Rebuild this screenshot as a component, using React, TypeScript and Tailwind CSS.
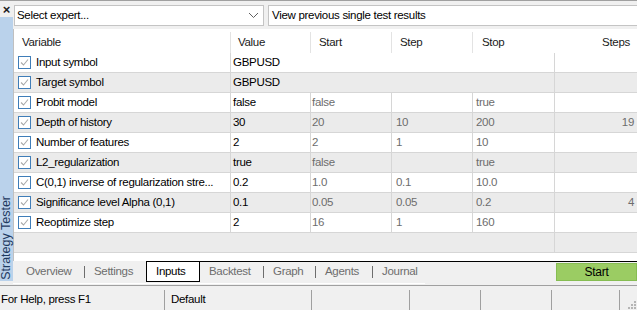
import React from 'react';

interface InputRow {
  name: string;
  value: string;
  merged?: boolean;
  start?: string;
  step?: string;
  stop?: string;
  steps?: string;
}

const rows: InputRow[] = [
  { name: 'Input symbol', value: 'GBPUSD', merged: true },
  { name: 'Target symbol', value: 'GBPUSD', merged: true },
  { name: 'Probit model', value: 'false', start: 'false', step: '', stop: 'true', steps: '' },
  { name: 'Depth of history', value: '30', start: '20', step: '10', stop: '200', steps: '19' },
  { name: 'Number of features', value: '2', start: '2', step: '1', stop: '10', steps: '' },
  { name: 'L2_regularization', value: 'true', start: 'false', step: '', stop: 'true', steps: '' },
  { name: 'C(0,1) inverse of regularization stre...', value: '0.2', start: '1.0', step: '0.1', stop: '10.0', steps: '' },
  { name: 'Significance level Alpha (0,1)', value: '0.1', start: '0.05', step: '0.05', stop: '0.2', steps: '4' },
  { name: 'Reoptimize step', value: '2', start: '16', step: '1', stop: '160', steps: '' },
];

function CheckBox() {
  return (
    <span className="w-[13px] h-[13px] shrink-0 border border-[#3f7db8] bg-white flex items-center justify-center">
      <svg width="9" height="9" viewBox="0 0 9 9">
        <path d="M1 4.5 L3.5 7 L8 1.5" stroke="#a9a9a9" strokeWidth="1.1" fill="none" />
      </svg>
    </span>
  );
}

function Sep() {
  return <span className="w-px h-[12px] bg-[#6d6d6d] shrink-0" />;
}

export default function App() {
  return (
    <div className="w-[637px] h-[310px] overflow-hidden bg-[#f0f0f0] border-t border-[#a0a0a0] flex flex-col font-['Liberation_Sans',Arial,sans-serif] text-[11.5px] tracking-[-0.3px] text-black">
      <div className="flex h-[285px]">
        {/* Sidebar */}
        <div className="w-[13px] shrink-0 flex flex-col">
          <div className="h-[16px] flex items-center justify-center text-[13px] font-bold text-[#202020] leading-none">×</div>
          <div className="h-[264px] bg-[#bad2eb] flex flex-col justify-end items-center pb-[1px]">
            <span className="[writing-mode:vertical-rl] rotate-180 text-[#1e3a5f] leading-none text-[12.5px] tracking-normal whitespace-nowrap">
              Strategy Tester
            </span>
          </div>
        </div>

        {/* Main */}
        <div className="flex-1 flex flex-col">
          {/* Selectors */}
          <div className="pt-[4px] pl-[1px] flex gap-[4px] h-[25px]">
            <div className="w-[250px] h-[21px] bg-white border border-[#c4c4c4] flex items-center pl-[2px] pr-[4px]">
              <span className="flex-1">Select expert...</span>
              <svg width="11" height="7" viewBox="0 0 11 7">
                <path d="M1 1 L5.5 5.5 L10 1" stroke="#606060" strokeWidth="1" fill="none" />
              </svg>
            </div>
            <div className="flex-1 h-[21px] bg-white border border-[#c4c4c4] border-r-0 flex items-center pl-[3px]">
              View previous single test results
            </div>
          </div>

          {/* Table */}
          <div className="mt-[3px] h-[232px] bg-white border-l border-[#c0c0c0] flex flex-col">
            <div className="h-[24px] pt-[3px] grid grid-cols-[217px_80px_81px_81px_82px_1fr] text-[#1a1a1a]">
              <div className="border-r border-[#e3e3e3] flex items-center pl-[8px]">Variable</div>
              <div className="border-r border-[#e3e3e3] flex items-center pl-[7px]">Value</div>
              <div className="border-r border-[#e3e3e3] flex items-center pl-[8px]">Start</div>
              <div className="border-r border-[#e3e3e3] flex items-center pl-[8px]">Step</div>
              <div className="flex items-center pl-[9px]">Stop</div>
              <div className="flex items-center justify-end pr-[7px]">Steps</div>
            </div>
            {rows.map((r, i) => (
              <div
                key={r.name}
                className={`h-[20px] grid grid-cols-[217px_80px_81px_81px_82px_1fr] border-b border-[#d6d6d6] ${
                  i % 2 === 1 ? 'bg-[#ebebeb]' : 'bg-white'
                }`}
              >
                <div className="border-r border-[#d6d6d6] flex items-center gap-[5px] pl-[4px] overflow-hidden whitespace-nowrap">
                  <CheckBox />
                  <span>{r.name}</span>
                </div>
                {r.merged ? (
                  <div className="col-span-4 border-r border-[#d6d6d6] flex items-center pl-[2px]">{r.value}</div>
                ) : (
                  <>
                    <div className="border-r border-[#d6d6d6] flex items-center pl-[2px]">{r.value}</div>
                    <div className="border-r border-[#d6d6d6] flex items-center pl-[1px] text-[#6d6d6d]">{r.start}</div>
                    <div className="border-r border-[#d6d6d6] flex items-center pl-[4px] text-[#6d6d6d]">{r.step}</div>
                    <div className="border-r border-[#d6d6d6] flex items-center pl-[3px] text-[#6d6d6d]">{r.stop}</div>
                  </>
                )}
                <div className="flex items-center justify-end pr-[3px] text-[#6d6d6d]">{r.steps}</div>
              </div>
            ))}
            <div className="h-[20px] grid grid-cols-[541px_1fr] border-b border-[#d6d6d6] bg-[#ebebeb]">
              <div className="border-r border-[#d6d6d6]" />
              <div />
            </div>
          </div>

          {/* Tabs */}
          <div className="h-[22px] flex">
            <div className="flex items-center text-[#6d6d6d] h-[21px] pt-[1px]">
              <span className="w-[71px] pl-[13px]">Overview</span>
              <Sep />
              <span className="w-[61px] pl-[9px]">Settings</span>
            </div>
            <div className="flex-1 flex border-t border-black h-[21px]">
              <div className="w-[54px] h-[20px] bg-white border-l border-r border-b border-black flex items-center pl-[9px]">
                Inputs
              </div>
              <div className="flex items-center text-[#6d6d6d] h-[20px]">
                <span className="w-[63px] pl-[9px]">Backtest</span>
                <Sep />
                <span className="w-[51px] pl-[9px]">Graph</span>
                <Sep />
                <span className="w-[56px] pl-[9px]">Agents</span>
                <Sep />
                <span className="pl-[9px]">Journal</span>
              </div>
              <div className="flex-1" />
              <div className="mt-[1px] w-[81px] h-[18px] bg-[#9bcc63] border border-[#86bd52] flex items-center justify-center text-[12px]">
                Start
              </div>
            </div>
          </div>
          <div className="h-px">
            <div className="w-[412px] h-px bg-white" />
          </div>
        </div>
      </div>

      {/* Status bar */}
      <div className="h-[25px] border-t border-[#a0a0a0] flex text-black">
        <div className="w-[164px] flex items-center pl-[1px] pt-[3px]">For Help, press F1</div>
        <div className="w-px mt-[4px] bg-[#a0a0a0]" />
        <div className="w-[146px] flex items-center pl-[6px] pt-[3px]">Default</div>
        <div className="w-px mt-[4px] bg-[#a0a0a0]" />
        <div className="w-[97px]" />
        <div className="w-px mt-[4px] bg-[#a0a0a0]" />
        <div className="w-[70px]" />
        <div className="w-px mt-[4px] bg-[#a0a0a0]" />
        <div className="w-[70px]" />
        <div className="w-px mt-[4px] bg-[#a0a0a0]" />
        <div className="w-[67px]" />
        <div className="w-px mt-[4px] bg-[#a0a0a0]" />
        <div className="flex-1 flex items-end justify-end pr-[1px] pb-[1px]">
          <svg width="8" height="8" viewBox="0 0 8 8">
            <rect x="6" y="0" width="2" height="2" fill="#b5b5b5" />
            <rect x="3" y="3" width="2" height="2" fill="#b5b5b5" />
            <rect x="6" y="3" width="2" height="2" fill="#b5b5b5" />
            <rect x="0" y="6" width="2" height="2" fill="#b5b5b5" />
            <rect x="3" y="6" width="2" height="2" fill="#b5b5b5" />
            <rect x="6" y="6" width="2" height="2" fill="#b5b5b5" />
          </svg>
        </div>
      </div>
    </div>
  );
}
